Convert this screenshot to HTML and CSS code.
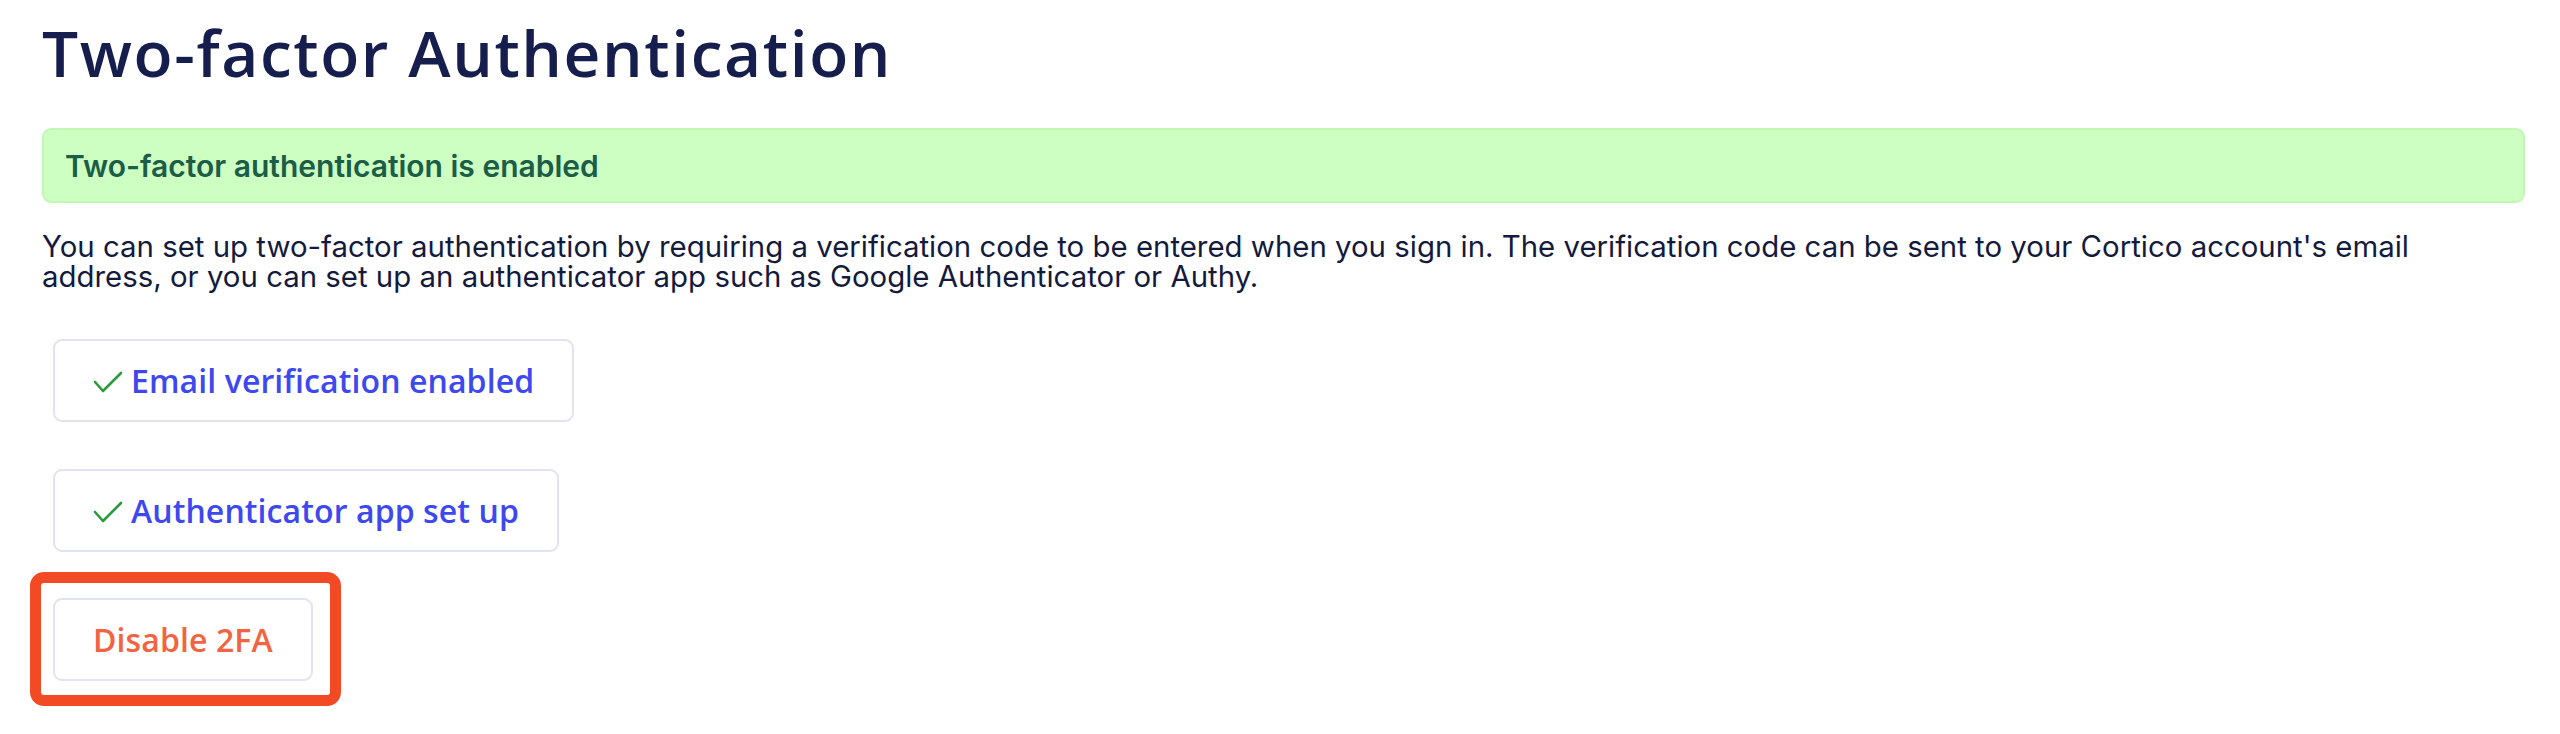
FILE: index.html
```html
<!DOCTYPE html>
<html lang="en">
<head>
<meta charset="utf-8">
<title>Two-factor Authentication</title>
<link rel="stylesheet" href="styles.css">
</head>
<body>
<main class="page">
  <h1 class="title">Two-factor Authentication</h1>
  <div class="alert">Two-factor authentication is enabled</div>
  <p class="intro">You can set up two-factor authentication by requiring a verification code to be entered when you sign in. The verification code can be sent to your Cortico account's email address, or you can set up an authenticator app such as Google Authenticator or Authy.</p>
  <div class="actions">
    <button class="btn btn-primary" type="button">
      <svg class="check" viewBox="0 0 30 22" width="30" height="22" aria-hidden="true"><polyline points="2,11 10,20 28,2" fill="none" stroke="#2a9a3e" stroke-width="2.6" stroke-linecap="round" stroke-linejoin="round"/></svg>
      <span>Email verification enabled</span>
    </button>
    <button class="btn btn-primary" type="button">
      <svg class="check" viewBox="0 0 30 22" width="30" height="22" aria-hidden="true"><polyline points="2,11 10,20 28,2" fill="none" stroke="#2a9a3e" stroke-width="2.6" stroke-linecap="round" stroke-linejoin="round"/></svg>
      <span>Authenticator app set up</span>
    </button>
    <div class="highlight">
      <button class="btn btn-danger" type="button">Disable 2FA</button>
    </div>
  </div>
</main>
</body>
</html>
```
FILE: styles.css
```css
* { box-sizing: border-box; }
html, body { margin: 0; padding: 0; background: #ffffff; }
body { font-family: "Inter", "Liberation Sans", sans-serif; color: #141a3c; }

.page {
  min-height: 100vh;
  padding: 15px 35px 0 42px;
  display: flex;
  flex-direction: column;
  align-items: stretch;
}

.title {
  margin: 0;
  font-family: "Open Sans", "Liberation Sans", sans-serif;
  font-weight: 600;
  font-size: 64px;
  line-height: 76px;
  letter-spacing: 1.6px;
  color: #151e4d;
}

.alert {
  margin-top: 37px;
  height: 75px;
  display: flex;
  align-items: center;
  padding: 0 21px;
  background: #cdfec2;
  border: 2px solid #c2f7b6;
  border-radius: 9px;
  font-family: "Inter", "Liberation Sans", sans-serif;
  font-weight: 600;
  font-size: 30px;
  color: #1b5d46;
}

.intro {
  margin: 29px 0 0 0;
  font-size: 29.4px;
  line-height: 30px;
  color: #141a3c;
}

.actions {
  margin-top: 47px;
  padding-left: 11px;
  display: flex;
  flex-direction: column;
  align-items: flex-start;
  gap: 47px;
}

.btn {
  height: 83px;
  display: inline-flex;
  align-items: center;
  gap: 8px;
  padding: 0 38px;
  background: #ffffff;
  border: 2px solid #e2e2f3;
  border-radius: 9px;
  font-family: "Open Sans", "Liberation Sans", sans-serif;
  font-weight: 600;
  font-size: 32px;
  letter-spacing: 0.1px;
  cursor: pointer;
}

.btn-primary { color: #3e48ef; }
.btn-danger { color: #f26441; }

.check { flex: none; margin-top: 2px; }

.highlight {
  position: relative;
  margin-top: -1px;
}

.highlight::before {
  content: "";
  position: absolute;
  top: -26px;
  left: -23px;
  right: -28px;
  bottom: -25px;
  border: 11px solid #f24a24;
  border-radius: 14px;
  pointer-events: none;
}
```
